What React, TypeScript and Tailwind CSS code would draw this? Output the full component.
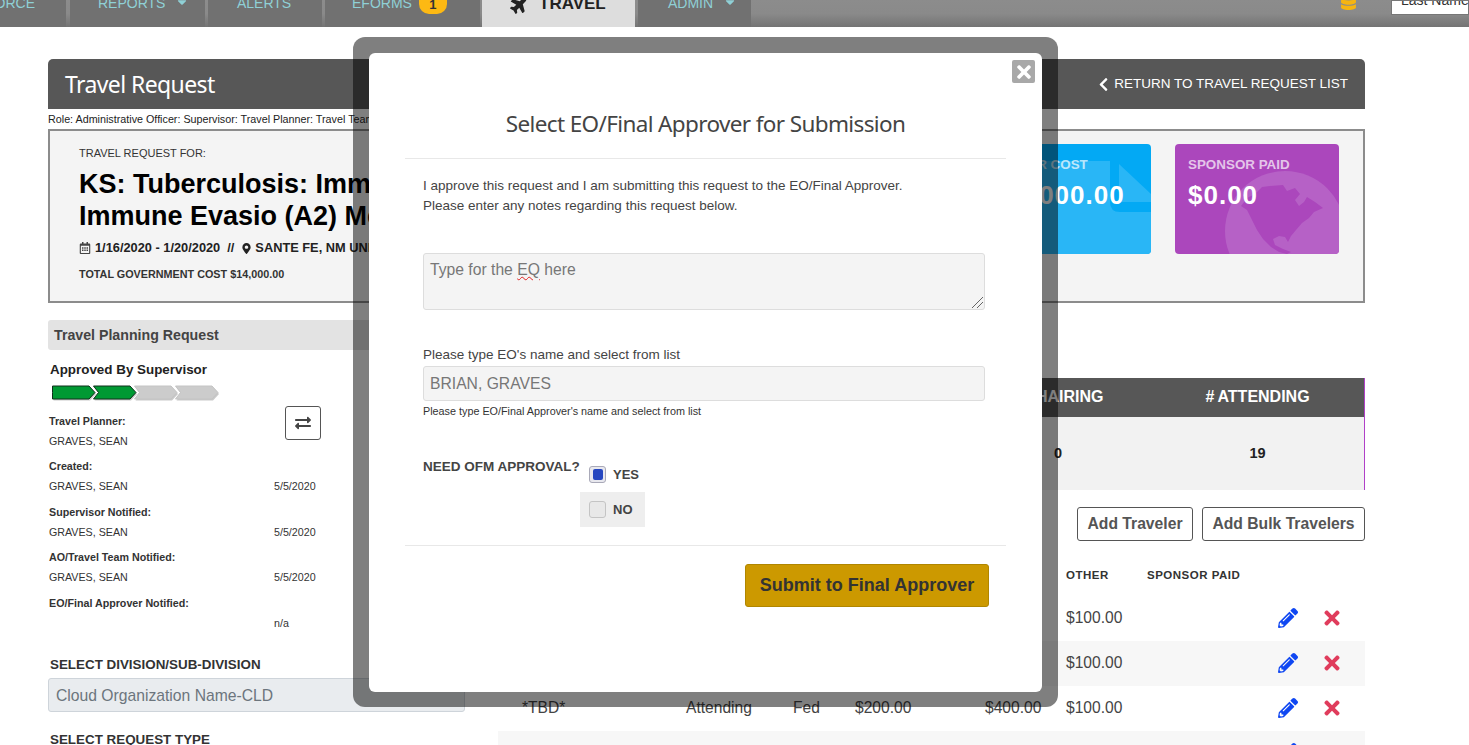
import React from 'react';
import {
  FaCaretDown,
  FaChevronLeft,
  FaDatabase,
  FaExchangeAlt,
  FaMapMarkerAlt,
  FaPencilAlt,
  FaPlane,
  FaRegCalendarAlt,
  FaTimes,
} from 'react-icons/fa';

const tableCols = 'grid grid-cols-[188px_107px_62px_130px_81px_81px_131px_45px_42px] items-center';

const people = [
  { label: 'Travel Planner:', name: 'GRAVES, SEAN', date: '' },
  { label: 'Created:', name: 'GRAVES, SEAN', date: '5/5/2020' },
  { label: 'Supervisor Notified:', name: 'GRAVES, SEAN', date: '5/5/2020' },
  { label: 'AO/Travel Team Notified:', name: 'GRAVES, SEAN', date: '5/5/2020' },
  { label: 'EO/Final Approver Notified:', name: '', date: 'n/a' },
];

function NavBar() {
  return (
    <div className="flex h-[27px] overflow-hidden bg-gradient-to-b from-[#8c8c8c] via-[#8a8a8a] to-[#747474] text-[14px] text-[#8fd0d6]">
      <div className="flex h-[27px] w-[66px] justify-end bg-[#717171] pr-[31px]">
        <span className="-mt-[6px] leading-[18px]">ORCE</span>
      </div>
      <div className="ml-[4px] flex h-[27px] w-[135px] bg-[#717171] pl-[28px]">
        <span className="-mt-[6px] leading-[18px]">REPORTS</span>
        <FaCaretDown className="-mt-[5px] ml-[10px] text-[14px]" />
      </div>
      <div className="ml-[3px] flex h-[27px] w-[114px] bg-[#717171] pl-[29px]">
        <span className="-mt-[6px] leading-[18px]">ALERTS</span>
      </div>
      <div className="ml-[3px] flex h-[27px] w-[155px] bg-[#717171] pl-[27px]">
        <span className="-mt-[6px] leading-[18px]">EFORMS</span>
        <span className="-mt-[6px] ml-[7px] flex h-[20px] w-[28px] items-center justify-center rounded-b-[10px] bg-[#fdb913] pt-[2px] text-[13px] font-bold text-[#333]">
          1
        </span>
      </div>
      <div className="ml-[2px] flex h-[27px] w-[153px] bg-[#dddddd] pl-[28px] text-[17px] font-bold text-[#222]">
        <FaPlane className="-mt-[5px] text-[19px] -rotate-45" />
        <span className="-mt-[5px] ml-[10px] leading-[18px]">TRAVEL</span>
      </div>
      <div className="ml-[3px] flex h-[27px] w-[113px] bg-[#717171] pl-[30px]">
        <span className="-mt-[6px] leading-[18px]">ADMIN</span>
        <FaCaretDown className="-mt-[5px] ml-[10px] text-[14px]" />
      </div>
      <div className="ml-auto flex h-[14px] items-start">
        <FaDatabase className="-mt-[7px] mr-[34px] text-[17px] text-[#f6b510]" />
        <div className="h-[15px] w-[78px] overflow-hidden whitespace-nowrap border border-[#777] bg-white pl-[9px] text-[14px] text-[#333]">
          <span className="-mt-[10px] block leading-[18px]">Last Name</span>
        </div>
      </div>
    </div>
  );
}

function ProgressSteps() {
  const fills = ['#009933', '#009933', '#cccccc', '#cccccc'];
  return (
    <svg width="170" height="18" viewBox="0 0 170 18" className="ml-[4px] mt-[6px] block">
      {fills.map((fill, i) => {
        const notch = i === 0 ? 0 : 5;
        const shape = `M0.5 1 H37 L43 7.5 L37 14 H0.5 L${0.5 + notch} 7.5 Z`;
        return (
          <g key={i} transform={`translate(${i * 41},0)`}>
            <path d={shape} fill="#888" opacity="0.45" transform="translate(1,1.5)" />
            <path d={shape} fill={fill} stroke={i < 2 ? '#10301c' : '#c4c4c4'} strokeWidth="1" />
          </g>
        );
      })}
    </svg>
  );
}

function CostCards() {
  return (
    <div className="flex gap-[24px] pr-[24px] pt-[13px]">
      <div className="relative h-[110px] w-[164px] overflow-hidden rounded-[4px] bg-[#03a9f4]">
        <svg width="164" height="110" viewBox="0 0 164 110" className="absolute inset-0">
          <path d="M0 17 H123 V58 Q123 68 133 68 H164 V110 H0 Z" fill="#29b6f6" />
          <path d="M132 20 L164 50 V58 H132 Z" fill="#29b6f6" />
        </svg>
        <div className="relative pl-[13px] pt-[13px]">
          <div className="text-[13.4px] font-bold leading-[15px] text-white/70">OTHER COST</div>
          <div className="mt-[7px] text-[26px] font-bold leading-[32px] tracking-[1px] text-white">$4,000.00</div>
        </div>
      </div>
      <div className="relative h-[110px] w-[164px] overflow-hidden rounded-[4px] bg-[#ab47bc]">
        <svg width="164" height="110" viewBox="0 0 164 110" className="absolute inset-0">
          <circle cx="110" cy="87" r="60" fill="#b661c6" />
          <path
            d="M87 43 L95 42 L108 41 L112 47 L120 44 L125 50 L120 56 L124 62 L129 58 L132 53 L140 58 L148 64 L139 68 L134 74 L127 79 L121 86 L116 92 L113 98 L110 93 L104 92 L98 95 L100 101 L108 105 L116 108 L112 110 L104 108 L96 103 L88 95 L82 86 L76 74 L72 66 L66 62 L72 54 L80 50 Z"
            fill="#ab47bc"
          />
        </svg>
        <div className="relative pl-[13px] pt-[13px]">
          <div className="text-[13.4px] font-bold leading-[15px] text-white/70">SPONSOR PAID</div>
          <div className="mt-[7px] text-[26px] font-bold leading-[32px] tracking-[1px] text-white">$0.00</div>
        </div>
      </div>
    </div>
  );
}

function LeftColumn() {
  return (
    <div className="w-[417px]">
      <div className="flex h-[30px] items-center rounded-[3px] bg-[#e3e3e3] pl-[6px] pt-[1px] text-[14.2px] font-bold text-[#444]">
        Travel Planning Request
      </div>
      <div className="ml-[2px] mt-[11px] text-[13.4px] font-bold leading-[18px] text-[#222]">Approved By Supervisor</div>
      <ProgressSteps />
      <div className="relative mt-[4.7px] text-[10.7px] text-[#333]">
        <button className="absolute left-[237px] -top-[2px] flex h-[34px] w-[36px] items-center justify-center rounded-[3px] border border-[#555] bg-white text-[16px] text-[#444]">
          <FaExchangeAlt />
        </button>
        {people.map((p) => (
          <div key={p.label} className="h-[45.5px] pl-[1px]">
            <div className="pt-[3px] font-bold leading-[20px]">{p.label}</div>
            <div className="grid grid-cols-[225px_1fr] leading-[20px]">
              <span>{p.name}</span>
              <span>{p.date}</span>
            </div>
          </div>
        ))}
      </div>
      <div className="ml-[2px] mt-[21.3px] text-[13.4px] font-bold leading-[18px] text-[#333]">SELECT DIVISION/SUB-DIVISION</div>
      <div className="mt-[4px] flex h-[34px] items-center rounded-[3px] border border-[#ced4da] bg-[#e9ecef] pl-[7px] text-[15.7px] text-[#6c757d]">
        Cloud Organization Name-CLD
      </div>
      <div className="ml-[2px] mt-[19px] text-[13.4px] font-bold leading-[18px] text-[#333]">SELECT REQUEST TYPE</div>
    </div>
  );
}

function TravelerRow({ shaded }: { shaded: boolean }) {
  return (
    <div className={`${tableCols} h-[45px] pb-[2px] text-[15.6px] text-[#444] ${shaded ? 'bg-[#f7f7f7]' : 'bg-white'}`}>
      <span className="pl-[24px]">*TBD*</span>
      <span>Attending</span>
      <span>Fed</span>
      <span>$200.00</span>
      <span>$400.00</span>
      <span>$100.00</span>
      <span></span>
      <FaPencilAlt className="text-[20px] text-[#0f47f2]" />
      <FaTimes className="-ml-[2px] text-[22px] text-[#e03c5c]" />
    </div>
  );
}

function RightColumn() {
  return (
    <div className="flex-1">
      <div className="mt-[58px] border-r border-[#b040c8]">
        <div className="grid h-[39px] grid-cols-[460px_200px_1fr] items-center bg-[#575757] pb-[2px] text-center text-[16px] font-bold text-white">
          <span></span>
          <span className="pl-[12px]">CHAIRING</span>
          <span className="pr-[7px]">#&thinsp;ATTENDING</span>
        </div>
        <div className="grid h-[73px] grid-cols-[460px_200px_1fr] items-center bg-[#f2f2f2] text-center text-[14.5px] font-bold text-[#222]">
          <span></span>
          <span>0</span>
          <span className="pr-[7px]">19</span>
        </div>
      </div>
      <div className="mt-[17px] flex justify-end gap-[9px] text-[15.7px] font-bold text-[#555]">
        <button className="h-[34px] w-[116px] rounded-[3px] border border-[#555] bg-white">Add Traveler</button>
        <button className="h-[34px] w-[163px] rounded-[3px] border border-[#555] bg-white">Add Bulk Travelers</button>
      </div>
      <div className={`${tableCols} h-[55px] pt-[14px] text-[11.5px] font-bold tracking-[0.5px] text-[#333]`}>
        <span className="pl-[24px]">TRAVELER</span>
        <span>STATUS</span>
        <span>TYPE</span>
        <span>AIRFARE</span>
        <span>HOTEL</span>
        <span>OTHER</span>
        <span className="col-span-3">SPONSOR PAID</span>
      </div>
      {[false, true, false, true].map((shaded, i) => (
        <TravelerRow key={i} shaded={shaded} />
      ))}
    </div>
  );
}

function ApproverModal() {
  return (
    <div className="absolute left-[353px] top-[37px] h-[670px] w-[705px] rounded-[12px] bg-black/50 p-[16px] pb-[15px]">
      <div className="relative h-full rounded-[6px] bg-white text-[#444]">
        <button className="absolute right-[7px] top-[7px] flex h-[23px] w-[23px] items-center justify-center rounded-[2px] bg-[#a8a8a8] text-[20px] text-white">
          <FaTimes />
        </button>
        <div className="mx-[36px] h-[106px] border-b border-[#e8e8e8] pt-[53px] text-center font-['Noto_Sans',sans-serif] text-[22.5px] leading-[36px] tracking-[-0.63px] text-[#444]">
          Select EO/Final Approver for Submission
        </div>
        <div className="pl-[54px] pr-[57px]">
          <p className="mt-[17px] text-[13.5px] leading-[20px] text-[#444]">
            I approve this request and I am submitting this request to the EO/Final Approver.
            <br />
            Please enter any notes regarding this request below.
          </p>
          <div className="relative mt-[37px] h-[57px] rounded-[3px] border border-[#ddd] bg-[#f4f4f4] pl-[6px] pt-[6px] text-[15.7px] leading-[20px] text-[#777]">
            Type for the <span className="underline decoration-wavy decoration-[#e02020] decoration-1">EQ</span> here
            <svg width="14" height="14" viewBox="0 0 14 14" className="absolute bottom-0 right-0 text-[#666]">
              <path d="M2 13 L13 2 M7 13 L13 7" stroke="currentColor" strokeWidth="1" />
            </svg>
          </div>
          <div className="mt-[36px] text-[13.5px] leading-[18px]">Please type EO's name and select from list</div>
          <div className="mt-[2px] flex h-[35px] items-center rounded-[3px] border border-[#ddd] bg-[#f4f4f4] pl-[6px] text-[15.7px] text-[#777]">
            BRIAN, GRAVES
          </div>
          <div className="mt-[4px] text-[10.8px] leading-[12px] text-[#333]">
            Please type EO/Final Approver's name and select from list
          </div>
          <div className="mt-[40px] flex items-start">
            <div className="w-[157px] pt-[1px] text-[13.5px] font-bold leading-[18px] text-[#444]">NEED OFM APPROVAL?</div>
            <div>
              <div className="flex h-[35px] items-center gap-[7px] pl-[9px] text-[13px] font-bold">
                <span className="flex h-[17px] w-[17px] items-center justify-center rounded-[3px] border border-[#a9a9b8] bg-[#e8e8ee]">
                  <span className="h-[11px] w-[10px] rounded-[2px] bg-[#2546c0]"></span>
                </span>
                YES
              </div>
              <div className="flex h-[35px] w-[65px] items-center gap-[7px] bg-[#eeeeee] pl-[9px] text-[13px] font-bold">
                <span className="h-[17px] w-[17px] rounded-[3px] border border-[#c4c4c4] bg-[#e8e8e8]"></span>
                NO
              </div>
            </div>
          </div>
        </div>
        <div className="mx-[36px] mt-[18px] flex justify-end border-t border-[#e8e8e8] pr-[17px] pt-[18px]">
          <button className="h-[43px] w-[244px] rounded-[3px] border border-[#b08600] bg-[#cc9900] text-[18px] font-bold text-[#333]">
            Submit to Final Approver
          </button>
        </div>
      </div>
    </div>
  );
}

export default function App() {
  return (
    <div className="relative h-[745px] w-[1469px] overflow-hidden bg-white font-['Liberation_Sans',Arial,sans-serif]">
      <NavBar />
      <main className="w-[1365px] pl-[48px] pt-[32px]">
        <div className="flex h-[50px] items-center justify-between rounded-t-[5px] bg-[#575757] px-[17px] text-white">
          <h1 className="font-['Noto_Sans',sans-serif] text-[23px] tracking-[-0.6px]">Travel Request</h1>
          <a className="flex items-center gap-[3px] text-[13.5px]">
            <FaChevronLeft className="text-[15px]" />
            RETURN TO TRAVEL REQUEST LIST
          </a>
        </div>
        <div className="h-[20px] text-[10.75px] leading-[21px] text-[#222]">
          Role: Administrative Officer: Supervisor: Travel Planner: Travel Team
        </div>
        <div className="flex h-[174px] justify-between border-2 border-[#8c8c8c] bg-[#f4f4f4]">
          <div className="pl-[29px] pt-[15px]">
            <div className="text-[11px] leading-[14px] text-[#333]">TRAVEL REQUEST FOR:</div>
            <h2 className="mt-[8px] text-[27px] font-bold leading-[32px] text-black">
              KS: Tuberculosis: Immunity and
              <br />
              Immune Evasio (A2) Meeting
            </h2>
            <div className="mt-[7px] flex items-center text-[12.8px] font-bold leading-[18px] text-[#222]">
              <FaRegCalendarAlt className="mr-[4px] text-[12px] text-[#444]" />
              1/16/2020 - 1/20/2020
              <span className="mx-[7px]">//</span>
              <FaMapMarkerAlt className="mr-[3px] text-[11px]" />
              SANTE FE, NM UNITED STATES
            </div>
            <div className="mt-[10px] text-[10.8px] font-bold leading-[14px] text-[#333]">
              TOTAL GOVERNMENT COST $14,000.00
            </div>
          </div>
          <CostCards />
        </div>
        <div className="mt-[17px] flex gap-[33px]">
          <LeftColumn />
          <RightColumn />
        </div>
      </main>
      <ApproverModal />
    </div>
  );
}
